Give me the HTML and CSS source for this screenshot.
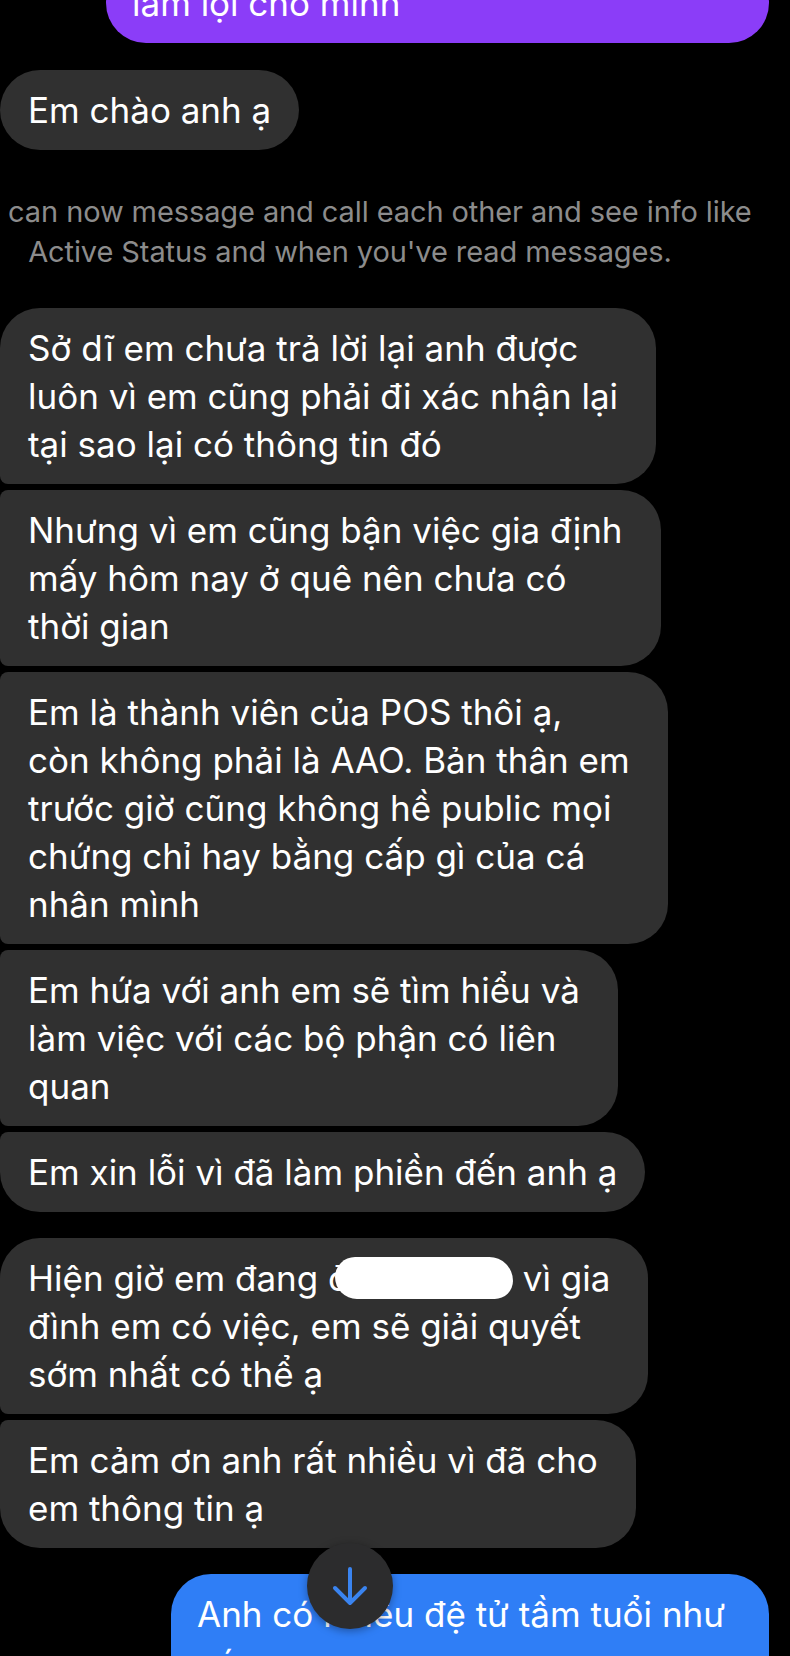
FILE: index.html
```html
<!DOCTYPE html>
<html lang="vi">
<head>
  <meta charset="UTF-8" />
  <meta name="viewport" content="width=device-width, initial-scale=1.0"/>
  <title>Messenger</title>
  <link rel="stylesheet" href="styles.css">
</head>
<body>

<main class="thread">
  <div class="row row-out">
    <div class="bubble bubble-purple first">làm lợi cho mình</div>
  </div>

  <div class="row row-in">
    <div class="bubble bubble-in solo one-line">Em chào anh ạ</div>
  </div>

  <p class="notice">You can now message and call each other and see info like<br>Active Status and when you've read messages.</p>

  <div class="group">
    <div class="bubble bubble-in top">Sở dĩ em chưa trả lời lại anh được<br>luôn vì em cũng phải đi xác nhận lại<br>tại sao lại có thông tin đó</div>
    <div class="bubble bubble-in mid">Nhưng vì em cũng bận việc gia định<br>mấy hôm nay ở quê nên chưa có<br>thời gian</div>
    <div class="bubble bubble-in mid">Em là thành viên của POS thôi ạ,<br>còn không phải là AAO. Bản thân em<br>trước giờ cũng không hề public mọi<br>chứng chỉ hay bằng cấp gì của cá<br>nhân mình</div>
    <div class="bubble bubble-in mid">Em hứa với anh em sẽ tìm hiểu và<br>làm việc với các bộ phận có liên<br>quan</div>
    <div class="bubble bubble-in bottom one-line">Em xin lỗi vì đã làm phiền đến anh ạ</div>
  </div>

  <div class="group">
    <div class="bubble bubble-in top">Hiện giờ em đang ở<span class="redact"></span> vì gia<br>đình em có việc, em sẽ giải quyết<br>sớm nhất có thể ạ</div>
    <div class="bubble bubble-in bottom">Em cảm ơn anh rất nhiều vì đã cho<br>em thông tin ạ</div>
  </div>

  <div class="row row-out last-row">
    <div class="bubble bubble-blue">Anh có nhiều đệ tử tầm tuổi như<br>các em</div>
    <button class="scroll-down" aria-label="Scroll to latest">
      <svg width="86" height="86" viewBox="0 0 86 86">
        <path d="M43 26 L43 60 M28 45 L43 60 L58 45" fill="none" stroke="#3a84f0" stroke-width="4" stroke-linecap="round" stroke-linejoin="round"/>
      </svg>
    </button>
  </div>
</main>

</body>
</html>
```

FILE: styles.css
```css
:root {
  --bg: #000000;
  --incoming: #303030;
  --purple: #8b3df8;
  --blue: #2f7ef6;
  --muted: #8c8c8c;
}

* { margin: 0; padding: 0; box-sizing: border-box; }

html, body {
  background: var(--bg);
  color: #fff;
  font-family: 'Inter', 'Noto Sans', sans-serif;
  overflow: hidden;
}

.thread {
  display: flex;
  flex-direction: column;
  height: 1656px;
  overflow: hidden;
}

.row {
  display: flex;
}

.row-out {
  justify-content: flex-end;
  padding-right: 21px;
}

.row-in {
  justify-content: flex-start;
  margin-top: 27px;
}

.bubble {
  font-size: 35px;
  line-height: 48px;
  letter-spacing: 0;
  padding: 16px 38px 16px 28px;
  border-radius: 40px;
  white-space: nowrap;
  width: fit-content;
}

.bubble.one-line {
  padding-right: 28px;
}

.bubble-in {
  background: var(--incoming);
}

.bubble-purple {
  background: var(--purple);
  width: 663px;
  padding-left: 26px;
}

.first {
  margin-top: -37px;
}

.bubble-blue {
  background: var(--blue);
  width: 598px;
  padding-left: 26px;
  padding-bottom: 40px;
}

.group {
  display: flex;
  flex-direction: column;
  gap: 6px;
  margin-top: 36px;
}

.group + .group {
  margin-top: 26px;
}

.top { border-radius: 40px 40px 40px 8px; }
.mid { border-radius: 8px 40px 40px 8px; }
.bottom { border-radius: 8px 40px 40px 40px; }

.notice {
  margin: 42px 0 0 -90px;
  width: 880px;
  text-align: center;
  font-size: 29px;
  line-height: 40px;
  color: var(--muted);
  letter-spacing: -0.1px;
}

.redact {
  display: inline-block;
  width: 178px;
  height: 42px;
  margin-left: -14px;
  vertical-align: -8px;
  background: #fff;
  border-radius: 22px 26px 20px 24px;
}

.last-row {
  position: relative;
  margin-top: 26px;
}

.scroll-down {
  position: absolute;
  top: -31px;
  left: 307px;
  width: 86px;
  height: 86px;
  border: none;
  border-radius: 50%;
  background: #2c2c2d;
  box-shadow: 0 2px 8px rgba(0,0,0,0.35);
  display: flex;
  align-items: center;
  justify-content: center;
}
```
